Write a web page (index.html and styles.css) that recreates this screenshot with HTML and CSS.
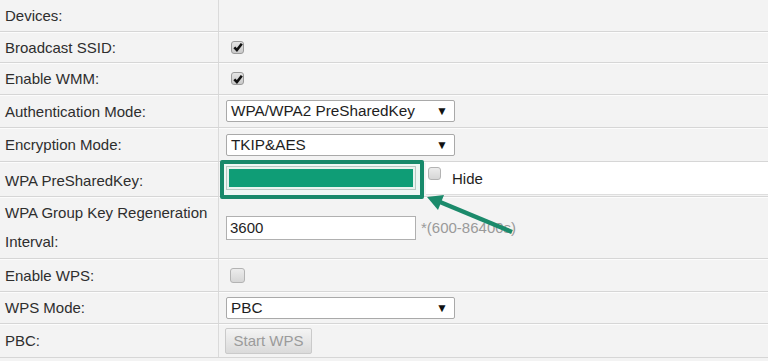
FILE: index.html
```html
<!DOCTYPE html>
<html lang="en">
<head>
    <meta charset="UTF-8">
    <meta name="viewport" content="width=device-width, initial-scale=1.0">
    <title>WLAN Settings</title>
    <link rel="stylesheet" href="styles.css">
</head>
<body>
    <div class="form">
        <div class="row r1">
            <div class="label">Devices:</div>
            <div class="value"></div>
        </div>
        <div class="row r2">
            <div class="label">Broadcast SSID:</div>
            <div class="value"><span class="check on"><svg viewBox="0 0 10 10"><path d="M1.3 5.3 L3.9 8 L8.8 1.8" /></svg></span></div>
        </div>
        <div class="row r3">
            <div class="label">Enable WMM:</div>
            <div class="value"><span class="check on"><svg viewBox="0 0 10 10"><path d="M1.3 5.3 L3.9 8 L8.8 1.8" /></svg></span></div>
        </div>
        <div class="row r4">
            <div class="label">Authentication Mode:</div>
            <div class="value">
                <div class="select"><span>WPA/WPA2 PreSharedKey</span><span class="caret">▼</span></div>
            </div>
        </div>
        <div class="row r5">
            <div class="label">Encryption Mode:</div>
            <div class="value">
                <div class="select"><span>TKIP&amp;AES</span><span class="caret">▼</span></div>
            </div>
        </div>
        <div class="row r6">
            <div class="label">WPA PreSharedKey:</div>
            <div class="value top">
                <div class="highlight"><div class="psk"></div></div>
                <div class="hide-wrap">
                    <span class="check"></span>
                    <span class="hide-text">Hide</span>
                </div>
            </div>
        </div>
        <div class="row r7">
            <div class="label two-line">WPA Group Key Regeneration<br>Interval:</div>
            <div class="value">
                <div class="text-input">3600</div>
                <span class="hint">*(600-86400s)</span>
            </div>
        </div>
        <div class="row r8">
            <div class="label">Enable WPS:</div>
            <div class="value"><span class="check big"></span></div>
        </div>
        <div class="row r9">
            <div class="label">WPS Mode:</div>
            <div class="value">
                <div class="select"><span>PBC</span><span class="caret">▼</span></div>
            </div>
        </div>
        <div class="row r10">
            <div class="label">PBC:</div>
            <div class="value"><button class="btn" disabled>Start WPS</button></div>
        </div>

        <!-- annotation arrow pointing at the key field -->
        <svg class="arrow" width="100" height="50" viewBox="0 0 100 50">
            <line x1="92" y1="44" x2="20" y2="14" />
            <polygon points="7,9 24,7 18,22" />
        </svg>
    </div>
</body>
</html>
```

FILE: styles.css
```css
body {
    margin: 0;
    background: #f3f3f3;
    font-family: "Liberation Sans", Arial, sans-serif;
    font-size: 15px;
    color: #2e2e2e;
}
.form {
    position: relative;
    width: 768px;
}
.row {
    display: grid;
    grid-template-columns: 218px 1fr;
    box-sizing: border-box;
    border-bottom: 1px solid #d6d6d6;
    box-shadow: 0 1px 0 #fcfcfc;
}
.r1 { height: 32px; }
.r2 { height: 31px; }
.r3 { height: 32px; }
.r4 { height: 33px; }
.r5 { height: 34px; }
.r6 { height: 35px; }
.r7 { height: 62px; }
.r8 { height: 33px; }
.r9 { height: 32px; }
.r10 { height: 34px; }
.label {
    display: flex;
    align-items: center;
    padding-left: 5px;
    white-space: nowrap;
}
.two-line {
    display: block;
    line-height: 29px;
    padding-top: 1px;
}
.value {
    display: flex;
    align-items: center;
    padding-left: 7px;
    border-left: 1px solid #dadada;
}
.value.top {
    align-items: flex-start;
}
.check {
    display: inline-flex;
    align-items: center;
    justify-content: center;
    width: 13px;
    height: 13px;
    margin-left: 5px;
    box-sizing: border-box;
    border: 1px solid #b3b3b3;
    border-radius: 3px;
    background: linear-gradient(#ececec, #d6d6d6);
}
.check.on {
    border-color: #9a9a9a;
    background: linear-gradient(#e4e4e4, #c9c9c9);
}
.check.big {
    width: 15px;
    height: 15px;
    margin-left: 4px;
}
.check svg {
    width: 10px;
    height: 10px;
}
.check path {
    fill: none;
    stroke: #111;
    stroke-width: 2.6;
}
.select {
    display: flex;
    align-items: center;
    justify-content: space-between;
    width: 229px;
    height: 22px;
    box-sizing: border-box;
    padding: 0 6px 0 4px;
    background: #fff;
    border: 1px solid #a9a9a9;
    border-radius: 2px;
    color: #1e1e1e;
    font-size: 15.3px;
}
.caret {
    font-size: 12px;
    color: #111;
}
.highlight {
    position: relative;
    z-index: 1;
    margin: -2px 0 0 -6px;
    padding: 2px 4px 5px 2px;
    border: 4px solid #17896a;
    border-radius: 2px;
    background: #eef7f4;
}
.psk {
    width: 190px;
    height: 24px;
    box-sizing: border-box;
    border: 1px solid #b9c9c3;
    background: #0f9d76;
    box-shadow: inset 0 0 0 2px #e9f3ef;
}
.hide-wrap {
    flex: 1;
    display: flex;
    align-items: center;
    height: 33px;
    margin-left: 2px;
    box-sizing: border-box;
    background: #fff;
    border-bottom: 1px solid #dedede;
}
.hide-wrap .check {
    align-self: flex-start;
    margin: 5px 0 0 2px;
}
.hide-text {
    margin-left: 11px;
    color: #1e1e1e;
}
.text-input {
    width: 190px;
    height: 24px;
    box-sizing: border-box;
    padding: 2px 3px;
    background: #fff;
    border: 1px solid #b0b0b0;
    color: #1e1e1e;
    line-height: 18px;
}
.hint {
    margin-left: 5px;
    color: #9a9a9a;
}
.btn {
    margin-left: -1px;
    width: 87px;
    height: 26px;
    padding: 0;
    font-family: inherit;
    font-size: 15px;
    color: #9b9b9b;
    border: 1px solid #cacaca;
    border-radius: 2px;
    background: linear-gradient(#f4f4f4, #dadada);
}
.arrow {
    position: absolute;
    left: 420px;
    top: 188px;
    z-index: 2;
}
.arrow line {
    stroke: #1b8a6b;
    stroke-width: 4.5;
}
.arrow polygon {
    fill: #1b8a6b;
}
```
